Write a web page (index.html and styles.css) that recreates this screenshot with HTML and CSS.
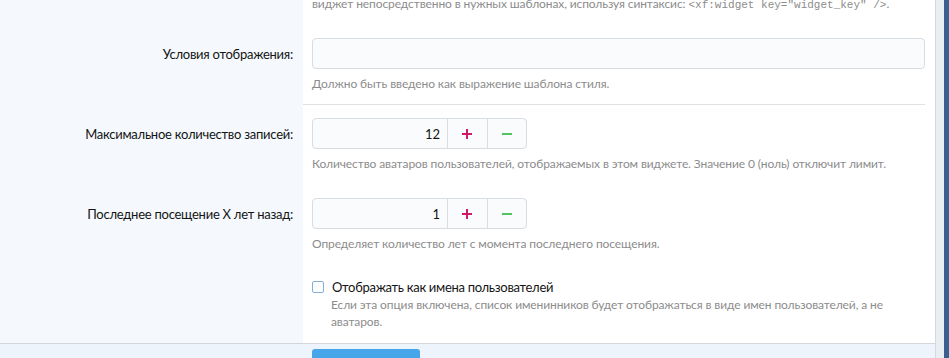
FILE: index.html
```html
<!DOCTYPE html>
<html lang="ru">
<head>
  <meta charset="UTF-8">
  <meta name="viewport" content="width=device-width, initial-scale=1.0">
  <title>Виджет: дни рождения</title>

  <link rel="stylesheet" href="styles.css">
</head>
<body>

<div class="page">
  <div class="panel">
    <div class="form-body">

      <div class="row row-top">
        <div class="row-label"></div>
        <div class="row-field">
          <p class="hint">виджет непосредственно в нужных шаблонах, используя синтаксис: <code>&lt;xf:widget key="widget_key" /&gt;</code>.</p>
        </div>
      </div>

      <div class="row">
        <div class="row-label"><label for="displayCondition">Условия отображения:</label></div>
        <div class="row-field divided">
          <input type="text" id="displayCondition" class="text-input">
          <p class="hint">Должно быть введено как выражение шаблона стиля.</p>
        </div>
      </div>

      <div class="row">
        <div class="row-label"><label for="limit">Максимальное количество записей:</label></div>
        <div class="row-field">
          <div class="number-box">
            <input type="text" id="limit" class="number-input" value="12">
            <button class="step-button step-up">
              <svg width="12" height="12" viewBox="0 0 12 12"><path d="M6 1v10M1 6h10" stroke="#d0186c" stroke-width="2"/></svg>
            </button>
            <button class="step-button step-down">
              <svg width="12" height="12" viewBox="0 0 12 12"><path d="M1 6h10" stroke="#53c466" stroke-width="2"/></svg>
            </button>
          </div>
          <p class="hint">Количество аватаров пользователей, отображаемых в этом виджете. Значение 0 (ноль) отключит лимит.</p>
        </div>
      </div>

      <div class="row">
        <div class="row-label"><label for="lastVisit">Последнее посещение X лет назад:</label></div>
        <div class="row-field">
          <div class="number-box">
            <input type="text" id="lastVisit" class="number-input" value="1">
            <button class="step-button step-up">
              <svg width="12" height="12" viewBox="0 0 12 12"><path d="M6 1v10M1 6h10" stroke="#d0186c" stroke-width="2"/></svg>
            </button>
            <button class="step-button step-down">
              <svg width="12" height="12" viewBox="0 0 12 12"><path d="M1 6h10" stroke="#53c466" stroke-width="2"/></svg>
            </button>
          </div>
          <p class="hint">Определяет количество лет с момента последнего посещения.</p>
        </div>
      </div>

      <div class="row">
        <div class="row-label"></div>
        <div class="row-field">
          <label class="check">
            <span class="check-box"></span>
            <span class="check-text">Отображать как имена пользователей</span>
          </label>
          <p class="check-hint">Если эта опция включена, список именинников будет отображаться в виде имен пользователей, а не аватаров.</p>
        </div>
      </div>

    </div>

    <div class="submit-row">
      <button class="save-button">
        <svg width="14" height="14" viewBox="0 0 14 14"><path d="M2 1h8l3 3v9H1V1z" fill="none" stroke="#fff" stroke-width="1.5"/></svg>
        Сохранить
      </button>
    </div>
  </div>
  <div class="side-strip"></div>
</div>

</body>
</html>
```

FILE: styles.css
```css
html, body {
  margin: 0;
  height: 100%;
  overflow: hidden;
}

body {
  font-family: Lato, Roboto, "Noto Sans", sans-serif;
  font-size: 13px;
  color: #141414;
  background-color: #fff;
}

.page {
  display: flex;
  height: 100%;
}

.panel {
  width: 935px;
  border-right: 1px solid #d3d9df;
  display: flex;
  flex-direction: column;
}

.side-strip {
  flex: 1;
  background-color: #e9eef3;
  border-right: 5px solid #3a5f8e;
}

.form-body {
  margin-top: -5px;
}

.row {
  display: flex;
}

.row-label {
  width: 293px;
  flex-shrink: 0;
  padding: 20px 10px 0 0;
  background-color: #f5f9fd;
  text-align: right;
  line-height: 18px;
  letter-spacing: -0.25px;
}

.row-field {
  flex: 1;
  padding: 13px 10px 13px 9px;
}

.row-top .row-field {
  padding-top: 0;
}

.row-field.divided {
  margin-right: 10px;
  padding-right: 0;
  padding-bottom: 12px;
  border-bottom: 1px solid #e1e1e1;
}

.hint {
  margin: 6px 0 0;
  font-size: 12px;
  line-height: 17px;
  letter-spacing: -0.1px;
  color: #8c8c8c;
}

.row-top .hint {
  margin-top: 0;
}

.hint code {
  font-family: "Liberation Mono", "DejaVu Sans Mono", monospace;
  font-size: 11px;
  line-height: 0;
  letter-spacing: 0;
}

.text-input {
  display: block;
  box-sizing: border-box;
  width: 100%;
  height: 31px;
  border: 1px solid #d8dde2;
  border-radius: 4px;
  background-color: #f9fbfd;
  font: inherit;
  padding: 0 8px;
}

.number-box {
  display: flex;
  width: 215px;
  height: 31px;
  box-sizing: border-box;
  border: 1px solid #d8dde2;
  border-radius: 4px;
  background-color: #f9fbfd;
  overflow: hidden;
}

.number-input {
  box-sizing: border-box;
  width: 134px;
  border: none;
  background: transparent;
  font: inherit;
  font-size: 13px;
  color: #141414;
  text-align: right;
  padding: 0 7px 0 0;
}

.step-button {
  width: 40px;
  border: none;
  border-left: 1px solid #d8dde2;
  background: transparent;
  padding: 0;
  display: flex;
  align-items: center;
  justify-content: center;
  cursor: pointer;
}

.check {
  display: flex;
  align-items: center;
  line-height: 18px;
  letter-spacing: -0.3px;
}

.check-box {
  width: 10px;
  height: 10px;
  border: 1px solid #86add6;
  border-radius: 2px;
  background-color: #fdfeff;
  margin: 0 8px 0 0;
}

.check-hint {
  margin: 0;
  padding-left: 19px;
  font-size: 12px;
  line-height: 17px;
  letter-spacing: -0.1px;
  color: #8c8c8c;
}

.submit-row {
  flex: 1;
  border-top: 1px solid #d3d7db;
  background-color: #edf4fb;
  padding: 5px 0 0 312px;
}

.save-button {
  display: flex;
  align-items: flex-start;
  gap: 6px;
  width: 108px;
  height: 32px;
  border: none;
  border-radius: 3px;
  background-color: #47a5e9;
  color: #fff;
  font: inherit;
  padding: 9px 12px;
}
```
